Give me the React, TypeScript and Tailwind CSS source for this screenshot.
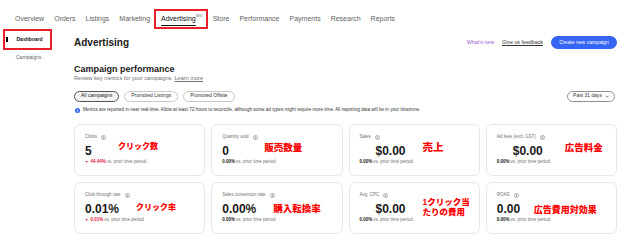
import React from "react";

type Metric = {
    label: string;
    value: string;
    money?: boolean;
    change: string;
    down?: boolean;
    note: React.ReactNode;
    noteClass: string;
};

const metrics: Metric[] = [
    { label: "Clicks", value: "5", change: "44.44%", down: true, note: "クリック数", noteClass: "left-[43px] top-[16px] text-[8px]" },
    { label: "Quantity sold", value: "0", change: "0.00%", note: "販売数量", noteClass: "left-[52px] top-[16px] text-[9.5px]" },
    { label: "Sales", value: "$0.00", money: true, change: "0.00%", note: "売上", noteClass: "left-[73px] top-[15px] text-[10.5px]" },
    { label: "Ad fees (excl. GST)", value: "$0.00", money: true, change: "0.00%", note: "広告料金", noteClass: "left-[78px] top-[16px] text-[9.5px]" },
    { label: "Click-through rate", value: "0.01%", change: "0.01%", down: true, note: "クリック率", noteClass: "left-[61px] top-[19px] text-[8px]" },
    { label: "Sales conversion rate", value: "0.00%", change: "0.00%", note: "購入転換率", noteClass: "left-[61px] top-[19px] text-[9.5px]" },
    {
        label: "Avg. CPC",
        value: "$0.00",
        money: true,
        change: "0.00%",
        note: (
            <>
                1クリック当
                <br />
                たりの費用
            </>
        ),
        noteClass: "left-[73px] top-[14px] text-[8.5px] leading-[10px]",
    },
    { label: "ROAS", value: "0.00", change: "0.00%", note: "広告費用対効果", noteClass: "left-[47px] top-[21px] text-[9px]" },
];

const InfoDot = () => (
    <svg width="5" height="5" viewBox="0 0 10 10" className="shrink-0">
        <circle cx="5" cy="5" r="4.2" fill="#f2f2f2" stroke="#8a8a8a" strokeWidth="1.2" />
        <rect x="4.4" y="4.2" width="1.2" height="3.2" fill="#707070" />
        <circle cx="5" cy="2.9" r="0.7" fill="#707070" />
    </svg>
);

const MetricCard = ({ m }: { m: Metric }) => (
    <div className="relative h-[52px] rounded-[6px] border border-[#e8e8e8] bg-white pl-[10px] pt-[10px]">
        <div className="flex items-center gap-[4px] h-[6px] text-[4.5px] text-[#707070]">
            <span>{m.label}</span>
            <InfoDot />
        </div>
        <div className={`mt-[3px] h-[14px] text-[12px] leading-[14px] font-bold text-[#191919] ${m.money ? "pl-[16px]" : ""}`}>
            {m.value}
        </div>
        <div className="mt-[2px] flex items-center h-[6px] text-[4.5px] text-[#707070]">
            {m.down ? (
                <span className="text-[#e0103a] font-bold">
                    <span className="text-[3.5px] mr-[2px]">▼</span>
                    {m.change}
                </span>
            ) : (
                <span className="font-bold text-[#191919]">{m.change}</span>
            )}
            <span className="ml-[1px]">vs. prior time period</span>
        </div>
        <div className={`absolute font-black text-[#ff0000] whitespace-nowrap ${m.noteClass}`}>{m.note}</div>
    </div>
);

const navItems = ["Overview", "Orders", "Listings", "Marketing", "Advertising", "Store", "Performance", "Payments", "Research", "Reports"];

export default function App() {
    return (
        <div
            className="w-[624px] h-[243px] overflow-hidden bg-white text-[#191919]"
            style={{ fontFamily: '"Liberation Sans", Arial, "Noto Sans CJK JP", sans-serif' }}
        >
            {/* top nav */}
            <nav className="h-[29px] pt-[9px] pl-[15px] flex items-center gap-[10px] text-[7px] text-[#5f5f5f]">
                {navItems.map((item) =>
                    item === "Advertising" ? (
                        <div
                            key={item}
                            className="-ml-[6px] -mr-[5px] h-[20px] flex items-center border-2 border-[#e8202a] pl-[5px] pr-[3px]"
                        >
                            <span className="text-[#111] underline underline-offset-[4px] decoration-[1.2px]">Advertising</span>
                            <span className="self-start mt-[3px] text-[3px] text-[#777]">NEW</span>
                        </div>
                    ) : (
                        <span key={item}>{item}</span>
                    )
                )}
            </nav>

            <div className="flex">
                {/* sidebar */}
                <aside className="w-[74px] shrink-0 pl-[3px]">
                    <div className="w-[49px] h-[21px] border-2 border-[#e8202a] flex items-center">
                        <div className="ml-[1px] w-[1.5px] h-[5px] bg-black" />
                        <span className="ml-[9px] text-[5px] font-bold text-[#111]">Dashboard</span>
                    </div>
                    <div className="mt-[4px] pl-[13px] text-[5px] text-[#5f5f5f]">Campaigns</div>
                </aside>

                {/* main */}
                <main className="w-[543px]">
                    <div className="mt-[7px] h-[13px] flex items-center">
                        <h1 className="text-[10px] font-bold">Advertising</h1>
                        <div className="ml-auto flex items-center gap-[8px] text-[5.3px]">
                            <span className="text-[#a35bd0]">What's new</span>
                            <span className="underline text-[#333]">Give us feedback</span>
                            <button className="h-[13px] w-[66px] rounded-full bg-[#3665f3] text-white text-[5.1px]">
                                Create new campaign
                            </button>
                        </div>
                    </div>

                    <h2 className="mt-[15px] text-[9px] leading-[11px] font-bold">Campaign performance</h2>
                    <p className="text-[5.6px] leading-[7px] text-[#707070]">
                        Review key metrics for your campaigns. <span className="underline">Learn more</span>
                    </p>

                    <div className="mt-[8.5px] flex items-center">
                        <div className="flex gap-[5px] text-[5px]">
                            <span className="h-[11px] px-[6px] flex items-center rounded-full border border-[#555] bg-[#f3f3f3] text-[#191919]">
                                All campaigns
                            </span>
                            <span className="h-[11px] px-[6px] flex items-center rounded-full border border-[#c7c7c7] text-[#333]">
                                Promoted Listings
                            </span>
                            <span className="h-[11px] px-[6px] flex items-center rounded-full border border-[#c7c7c7] text-[#333]">
                                Promoted Offsite
                            </span>
                        </div>
                        <span className="ml-auto mr-[2px] h-[11px] w-[48px] justify-center flex items-center gap-[3px] rounded-full border border-[#8f8f8f] text-[5px] text-[#333]">
                            Past 31 days
                            <svg width="4" height="3" viewBox="0 0 8 5">
                                <path d="M1 1l3 3 3-3" fill="none" stroke="#333" strokeWidth="1.2" />
                            </svg>
                        </span>
                    </div>

                    <div className="mt-[6px] h-[6px] flex items-center gap-[3px] text-[4.6px] text-[#333]">
                        <svg width="5" height="5" viewBox="0 0 10 10" className="ml-[1px]">
                            <circle cx="5" cy="5" r="5" fill="#3665f3" />
                            <rect x="4.3" y="4.3" width="1.4" height="3.4" fill="#fff" />
                            <circle cx="5" cy="2.8" r="0.8" fill="#fff" />
                        </svg>
                        <span>
                            Metrics are reported in near real-time. Allow at least 72 hours to reconcile, although some ad types might require more time. All reporting data will be in your timezone.
                        </span>
                    </div>

                    <div className="mt-[10px] grid grid-cols-4 gap-[6px]">
                        {metrics.map((m) => (
                            <MetricCard key={m.label} m={m} />
                        ))}
                    </div>
                </main>
            </div>
        </div>
    );
}
